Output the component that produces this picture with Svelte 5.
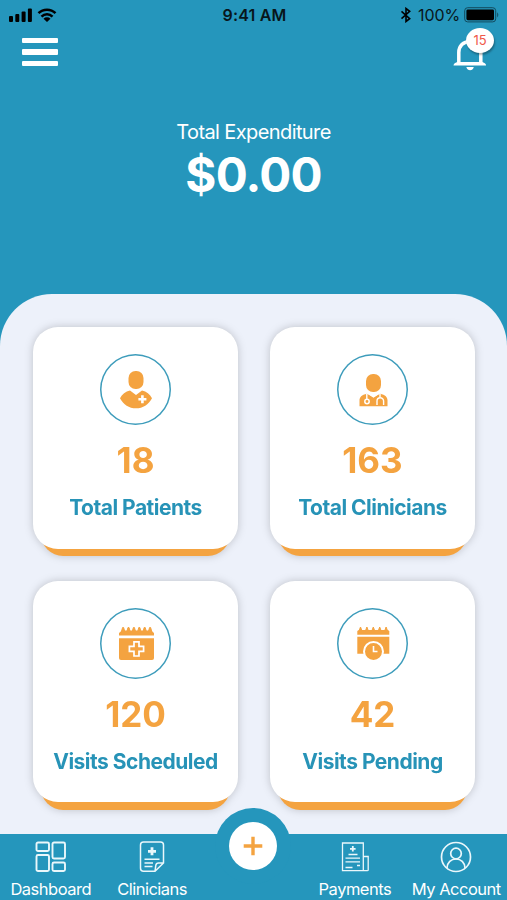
<script>
    let expenditure = '$0.00';
    let notifications = 15;

    const cards = [
        { icon: 'patient', value: 18, label: 'Total Patients' },
        { icon: 'clinician', value: 163, label: 'Total Clinicians' },
        { icon: 'scheduled', value: 120, label: 'Visits Scheduled' },
        { icon: 'pending', value: 42, label: 'Visits Pending' }
    ];
</script>

<div class="screen">
    <header>
        <div class="status">
            <div class="signal">
                <svg width="24" height="14" viewBox="0 0 24 14">
                    <rect x="0" y="8" width="4" height="6" rx="1"/>
                    <rect x="6.3" y="6" width="4" height="8" rx="1"/>
                    <rect x="12.6" y="3.5" width="4" height="10.5" rx="1"/>
                    <rect x="18.9" y="0.5" width="4" height="13.5" rx="1"/>
                </svg>
                <svg width="20" height="14" viewBox="0 0 20 14">
                    <path d="M1.5 5.2a12 12 0 0 1 17 0M4.5 8.6a7.7 7.7 0 0 1 11 0" fill="none" stroke="#000" stroke-width="2.5"/>
                    <path d="M6.5 10.7a5 5 0 0 1 7 0L10 14z"/>
                </svg>
            </div>
            <time>9:41 AM</time>
            <div class="power">
                <svg width="12" height="16" viewBox="0 0 12 16">
                    <path d="M1.5 4.4l8.2 7.2L6 14.5v-13l3.7 2.9-8.2 7.2" fill="none" stroke="#000" stroke-width="1.6"/>
                </svg>
                <span>100%</span>
                <svg width="36" height="16" viewBox="0 0 36 16">
                    <rect x=".7" y=".7" width="31" height="14.2" rx="3" fill="none" stroke="#124b5e" stroke-width="1"/>
                    <rect x="2.4" y="2.4" width="27.6" height="10.8" rx="1.4"/>
                    <path d="M33.2 5.2q2.2 2.6 0 5.2z" fill="#124b5e"/>
                </svg>
            </div>
        </div>
        <div class="toolbar">
            <button class="menu" aria-label="Menu"><i></i><i></i><i></i></button>
            <button class="bell" aria-label="Notifications">
                <svg width="34" height="34" viewBox="0 0 34 34">
                    <path d="M5.8 26V14.5c0-6.500 4.500-11 11-11s11 4.500 11 11V26" fill="none" stroke="#fff" stroke-width="3.5"/>
                    <path d="M.5 27.6q0-2.200 3.800-3.600h25q3.800 1.400 3.800 3.600zM13.300 29h7.500q-1 3.300-3.700 3.300T13.300 29z" fill="#fff"/>
                </svg>
                <span>{notifications}</span>
            </button>
        </div>
        <p>Total Expenditure</p>
        <h1>{expenditure}</h1>
    </header>

    <main>
        {#each cards as card}
            <article>
                <div class="face">
                    <div class="ring">
                        <svg width="40" height="40" viewBox="0 0 40 40">
                            {#if card.icon === 'patient'}
                                <rect x="12.5" y="1" width="15" height="18" rx="7"/>
                                <path d="M14 20.6l6 4.400 6-4.400C30.500 21.500 34 24.500 36 28.200 32.500 34.500 27 38.300 20 38.300S7.500 34.500 4 28.200C6 24.500 9.500 21.500 14 20.600z"/>
                                <path class="cut" d="M26.4 25.2v8M22.4 29.2h8" stroke-width="2.6"/>
                            {:else if card.icon === 'clinician'}
                                <rect x="13" y="4" width="15" height="18" rx="7"/>
                                <path d="M6.500 36.300v-6c0-3 2-5.300 7.500-6.500l6.500 3.500 6.500-3.500c5.500 1.200 7.500 3.500 7.500 6.500v6z"/>
                                <path class="cut" d="M14 22.500l6.500 4.300 6.500-4.300M13.800 24v5M27 24v3.500M24 35v-4a3.300 3.300 0 0 1 6.600 0v4" stroke-width="1.4"/>
                                <circle class="cut" cx="14" cy="31.5" r="2.2" stroke-width="1.5"/>
                            {:else if card.icon === 'scheduled'}
                                <path d="M3 12.500v-2.500l3-2.500h29l3 2.500v2.500z"/>
                                <path d="M5.300 9l1.300-4.500h1L8.900 9zm5.400 0l1.300-4.500h1L14.300 9zm5.400 0l1.300-4.500h1L19.700 9zm5.400 0l1.300-4.500h1L25.100 9zm5.400 0l1.300-4.500h1L30.500 9zm5.400 0l1.300-4.500h1L35.900 9z" stroke="#f4a340" stroke-linejoin="round"/>
                                <path d="M3 15.200h35V35q0 2-2 2H5q-2 0-2-2z"/>
                                <path class="cut" d="M18 18.800h5v4.600h4.600v5H23V33h-5v-4.600h-4.600v-5H18z" stroke-width="1.7"/>
                            {:else}
                                <path d="M4.300 11.800V8.500q0-1.500 2-1.500h28q2 0 2 1.500v3.300z"/>
                                <path d="M6 8l1.500-4L9 8zm6.400 0l1.500-4L15.400 8zm6.400 0l1.500-4L21.800 8zm6.400 0l1.500-4L28.200 8zm6.400 0l1.500-4L34.600 8z" stroke="#f4a340" stroke-linejoin="round"/>
                                <path d="M4.300 13.800h32v17h-32z"/>
                                <circle cx="20.5" cy="28.5" r="9.500" stroke="#fff" stroke-width="2"/>
                                <path class="cut" d="M20.500 23v5.500h4" stroke-width="1.6"/>
                            {/if}
                        </svg>
                    </div>
                    <strong>{card.value}</strong>
                    <h2>{card.label}</h2>
                </div>
            </article>
        {/each}
    </main>

    <nav>
        <a href="#dashboard">
            <svg width="32" height="32" viewBox="0 0 32 32" stroke-width="1.9">
                <rect x="1.5" y="1.5" width="12.5" height="8.5" rx="1.5"/>
                <rect x="1.5" y="14" width="12.5" height="16" rx="1.5"/>
                <rect x="17.5" y="1.5" width="12.5" height="16" rx="1.5"/>
                <rect x="17.5" y="21.5" width="12.5" height="8.5" rx="1.5"/>
            </svg>
            <span>Dashboard</span>
        </a>
        <a href="#clinicians">
            <svg width="32" height="32" viewBox="0 0 32 32" stroke-width="1.5">
                <path d="M19 30.300H7.500q-3 0-3-3V4q0-3 3-3h17q3 0 3 3v18zl.8-6q.3-2.300 2.700-2.300h5"/>
                <path d="M8.500 18.200h15M8.500 22h8.500M8.500 25.600h8"/>
                <path d="M16 6.300v8M12 10.300h8" stroke-width="2.8"/>
            </svg>
            <span>Clinicians</span>
        </a>
        <button class="add" aria-label="Add visit">
            <span>
                <svg width="20" height="20" viewBox="0 0 20 20"><path d="M10 .7v18.600M.7 10h18.600"/></svg>
            </span>
        </button>
        <a href="#payments">
            <svg width="32" height="32" viewBox="0 0 32 32" stroke-width="1.3">
                <path d="M28.800 29.700H3.500V2h20.800v27.500M24.300 15.500h4.900v14.200"/>
                <path d="M9.500 13.500h9M6.500 17.200h14.500M6.500 20.800h14.500M18 24.500h3M6.500 26.500h7"/>
                <path d="M13.800 5v5.500M11 7.800h5.600" stroke-width="1.8"/>
            </svg>
            <span>Payments</span>
        </a>
        <a href="#account">
            <svg width="32" height="32" viewBox="0 0 32 32" stroke-width="1.7">
                <circle cx="16" cy="16" r="14.5"/>
                <circle cx="16" cy="12.5" r="5.3"/>
                <path d="M7 27c.3-5.500 4-9 9-9s8.700 3.500 9 9"/>
            </svg>
            <span>My Account</span>
        </a>
    </nav>
</div>

<style>
    :global(body){
        margin: 0;
    }

    .screen{
        display: flex;
        flex-direction: column;
        width: 507px;
        height: 900px;
        overflow: hidden;
        background: #2596bc;
        font-family: Inter, "Liberation Sans", sans-serif;
    }

    button{
        padding: 0;
        border: 0;
        background: none;
    }

    svg{
        display: block;
    }

    header{
        height: 294px;
        flex: none;
        color: #fff;
        text-align: center;
    }

    .status{
        display: grid;
        grid-template-columns: 1fr auto 1fr;
        align-items: center;
        height: 29px;
        padding: 0 7px 0 9px;
        color: #08161b;
        font-size: 16px;
    }

    .signal, .power{
        display: flex;
        align-items: center;
        gap: 4px;
    }

    .power{
        justify-content: flex-end;
    }

    .power span{
        margin-left: 2px;
        letter-spacing: -.1px;
    }

    time{
        font-weight: 600;
        letter-spacing: .2px;
    }

    .toolbar{
        display: flex;
        justify-content: space-between;
        height: 91px;
        padding: 9px 20px 0 22px;
        box-sizing: border-box;
    }

    .menu{
        display: flex;
        flex-direction: column;
        gap: 6px;
        height: 28px;
    }

    .menu i{
        width: 36px;
        height: 5.3px;
        border-radius: 1px;
        background: #fff;
    }

    .bell{
        position: relative;
        width: 34px;
        height: 34px;
    }

    .bell span{
        position: absolute;
        top: -10px;
        left: 13px;
        width: 28px;
        height: 25px;
        border-radius: 50%;
        background: #fff;
        box-shadow: 1px 2px 2px rgba(0, 0, 0, .3);
        color: #f0584a;
        font: 13px/25px Inter, sans-serif;
    }

    header p{
        margin: 0;
        font-size: 20px;
        line-height: 24px;
        letter-spacing: -.6px;
    }

    h1{
        margin: 2px 0 0;
        font-size: 47.5px;
        font-weight: 700;
        line-height: 58px;
        letter-spacing: -.8px;
    }

    main{
        display: grid;
        grid-template-columns: 205px 205px;
        gap: 32px;
        align-content: start;
        height: 540px;
        padding: 33px;
        box-sizing: border-box;
        border-radius: 52px 52px 0 0;
        background: #edf1fa;
    }

    article{
        position: relative;
        z-index: 0;
        height: 221.5px;
        filter: drop-shadow(0 0 4px rgba(0, 0, 0, .2));
    }

    article::before{
        content: "";
        position: absolute;
        z-index: -1;
        inset: 20px 8px -7.5px;
        border-radius: 22px;
        background: #f4a340;
    }

    .face{
        display: flex;
        flex-direction: column;
        align-items: center;
        height: 100%;
        padding-top: 27px;
        box-sizing: border-box;
        border-radius: 25px;
        background: #fff;
    }

    .ring{
        display: grid;
        place-items: center;
        width: 71px;
        height: 71px;
        border-radius: 50%;
        box-shadow: inset 0 0 0 1.5px #3d9cbb;
        fill: #f4a340;
    }

    .ring .cut{
        fill: none;
        stroke: #fff;
    }

    strong{
        margin-top: 13px;
        color: #f4a340;
        font-size: 35px;
        font-weight: 650;
        line-height: 44px;
    }

    h2{
        margin: 13px 0 0;
        color: #2793b7;
        font-size: 21px;
        font-weight: 650;
        line-height: 26px;
        letter-spacing: -.5px;
        white-space: nowrap;
    }

    nav{
        display: grid;
        grid-template-columns: repeat(5, 1fr);
        flex: none;
        height: 66px;
        background: #2596bc;
    }

    a{
        display: flex;
        flex-direction: column;
        align-items: center;
        padding-top: 7px;
        color: #fff;
        font-size: 16.5px;
        line-height: 20px;
        letter-spacing: -.5px;
        text-decoration: none;
        white-space: nowrap;
    }

    a svg{
        fill: none;
        stroke: #eaf7fb;
    }

    a span{
        margin-top: 6px;
    }

    .add{
        display: grid;
        place-items: center;
        justify-self: center;
        position: relative;
        z-index: 1;
        width: 76px;
        height: 76px;
        margin-top: -26px;
        border-radius: 50%;
        background: #2596bc;
    }

    .add span{
        display: grid;
        place-items: center;
        width: 48px;
        height: 48px;
        border-radius: 50%;
        background: #fff;
    }

    .add svg{
        fill: none;
        stroke: #f4a340;
        stroke-width: 3.4;
    }
</style>
